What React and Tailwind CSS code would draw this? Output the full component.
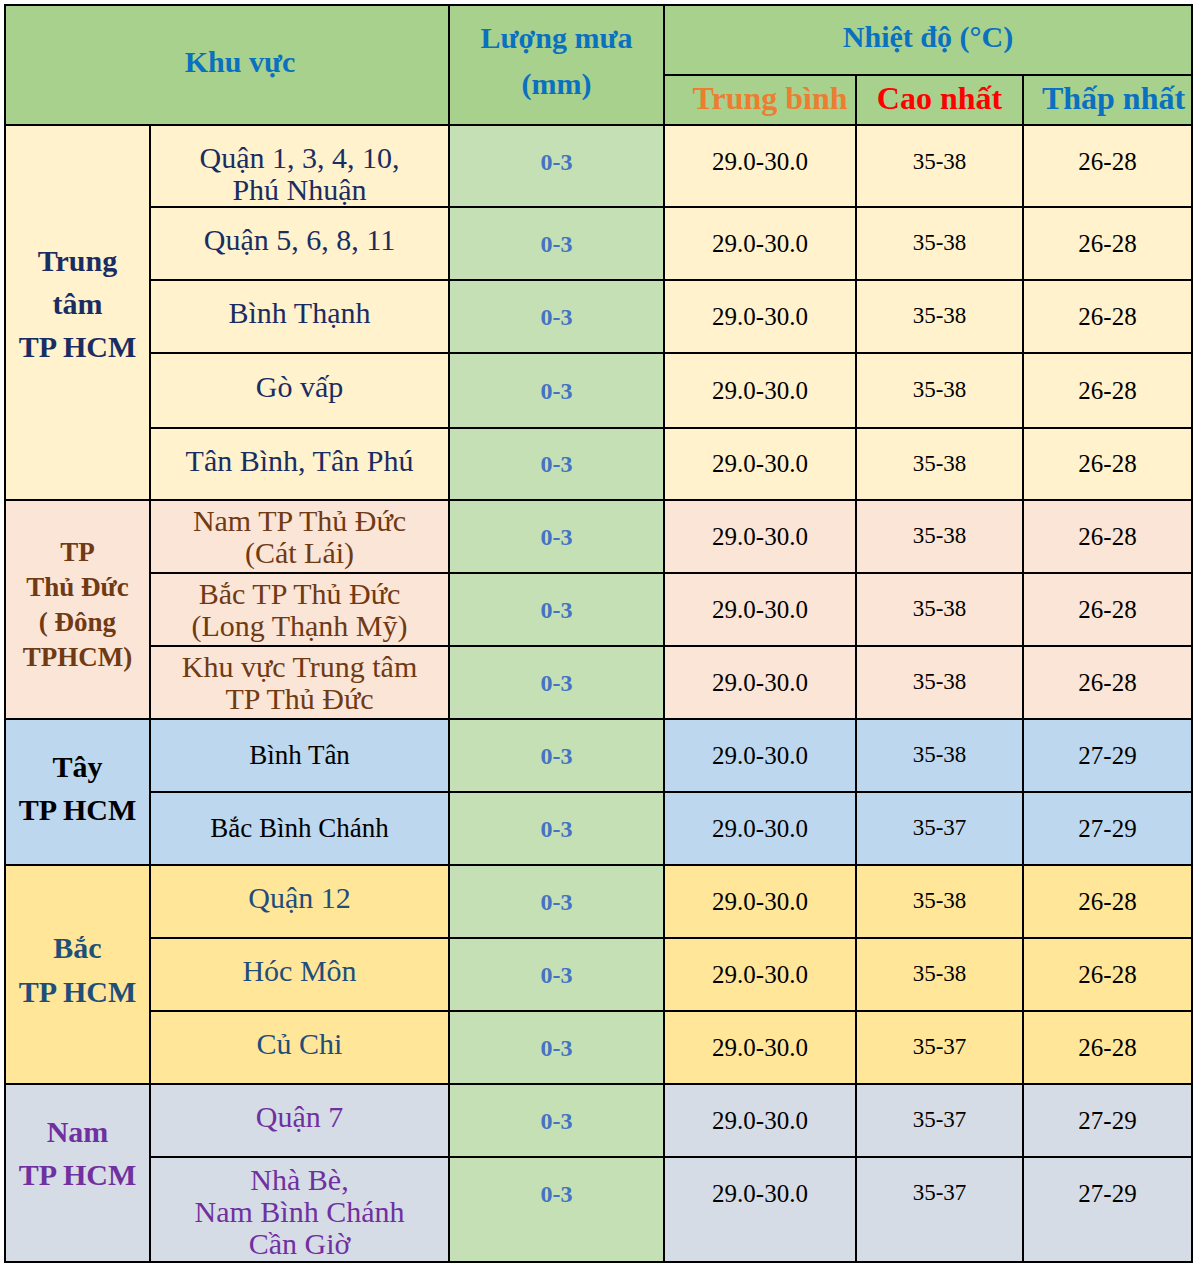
import React from "react";

const groups = [
  {
    label: ["Trung", "tâm", "TP HCM"],
    bg: "bg-[#fff2cc]",
    text: "text-[#1a2d63]",
    labelCls: "text-[30px] leading-[43px] pb-[18px]",
    rows: [
      { h: "h-[82px]", name: ["Quận 1, 3, 4, 10,", "Phú Nhuận"], pad: "pt-[16px]", numPad: "pb-[8px]", max: "35-38", min: "26-28" },
      { h: "h-[73px]", name: ["Quận 5, 6, 8, 11"], max: "35-38", min: "26-28" },
      { h: "h-[73px]", name: ["Bình Thạnh"], max: "35-38", min: "26-28" },
      { h: "h-[75px]", name: ["Gò vấp"], max: "35-38", min: "26-28" },
      { h: "h-[72px]", name: ["Tân Bình, Tân Phú"], max: "35-38", min: "26-28" },
    ],
  },
  {
    label: ["TP", "Thủ Đức", "( Đông", "TPHCM)"],
    bg: "bg-[#fbe5d6]",
    text: "text-[#6f3a14]",
    labelCls: "text-[27px] leading-[35px] pb-[10px]",
    rows: [
      { h: "h-[73px]", name: ["Nam TP Thủ Đức", "(Cát Lái)"], pad: "pb-0", max: "35-38", min: "26-28" },
      { h: "h-[73px]", name: ["Bắc TP Thủ Đức", "(Long Thạnh Mỹ)"], pad: "pb-0", max: "35-38", min: "26-28" },
      { h: "h-[73px]", name: ["Khu vực Trung tâm", "TP Thủ Đức"], pad: "pb-0", max: "35-38", min: "26-28" },
    ],
  },
  {
    label: ["Tây", "TP HCM"],
    bg: "bg-[#bdd7ee]",
    text: "text-black",
    labelCls: "text-[30px] leading-[43px] pb-[8px]",
    rows: [
      { h: "h-[73px]", name: ["Bình Tân"], pad: "pb-[2px]", small: true, max: "35-38", min: "27-29" },
      { h: "h-[73px]", name: ["Bắc Bình Chánh"], pad: "pb-[2px]", small: true, max: "35-37", min: "27-29" },
    ],
  },
  {
    label: ["Bắc", "TP HCM"],
    bg: "bg-[#ffe699]",
    text: "text-[#1f4e79]",
    labelCls: "text-[30px] leading-[44px] pb-[10px]",
    rows: [
      { h: "h-[73px]", name: ["Quận 12"], max: "35-38", min: "26-28" },
      { h: "h-[73px]", name: ["Hóc Môn"], max: "35-38", min: "26-28" },
      { h: "h-[73px]", name: ["Củ Chi"], max: "35-37", min: "26-28" },
    ],
  },
  {
    label: ["Nam", "TP HCM"],
    bg: "bg-[#d6dce5]",
    text: "text-[#7030a0]",
    labelCls: "text-[30px] leading-[43px] pb-[40px]",
    rows: [
      { h: "h-[73px]", name: ["Quận 7"], max: "35-37", min: "27-29" },
      { h: "h-[105px]", name: ["Nhà Bè,", "Nam Bình Chánh", "Cần Giờ"], pad: "pt-[5px]", numPad: "pb-[32px]", max: "35-37", min: "27-29" },
    ],
  },
];

const cell = "border-2 border-black text-center align-middle p-0";

export default function App() {
  return (
    <div className="bg-white w-[1196px] h-[1264px] pl-[4px] pt-[4px] font-['Liberation_Serif',serif]">
      <table className="table-fixed border-collapse w-[1189px]">
        <colgroup>
          <col className="w-[145px]" />
          <col className="w-[299px]" />
          <col className="w-[215px]" />
          <col className="w-[192px]" />
          <col className="w-[167px]" />
          <col className="w-[169px]" />
        </colgroup>
        <thead>
          <tr className="h-[70px] bg-[#a9d18e]">
            <th colSpan={2} rowSpan={2} className={`${cell} text-[30px] font-bold text-[#0a70c0] pb-[8px] pl-[26px]`}>
              Khu vực
            </th>
            <th rowSpan={2} className={`${cell} text-[30px] leading-[46px] font-bold text-[#0a70c0] pb-[8px]`}>
              Lượng mưa
              <br />
              (mm)
            </th>
            <th colSpan={3} className={`${cell} text-[30px] font-bold text-[#0a70c0] pb-[8px]`}>
              Nhiệt độ (°C)
            </th>
          </tr>
          <tr className="h-[50px] bg-[#a9d18e]">
            <th className={`${cell} text-[32px] leading-none font-bold text-[#ed7d31] whitespace-nowrap pb-[4px] pl-[20px]`}>Trung bình</th>
            <th className={`${cell} text-[32px] leading-none font-bold text-[#ff0000] whitespace-nowrap pb-[4px]`}>Cao nhất</th>
            <th className={`${cell} text-[32px] leading-none font-bold text-[#0a70c0] whitespace-nowrap pb-[4px] pl-[12px]`}>Thấp nhất</th>
          </tr>
        </thead>
        <tbody>
          {groups.map((g) =>
            g.rows.map((r, i) => (
              <tr key={g.label.join() + i} className={`${r.h} ${g.bg}`}>
                {i === 0 && (
                  <td rowSpan={g.rows.length} className={`${cell} ${g.text} ${g.labelCls} font-bold`}>
                    {g.label.map((l, k) => (
                      <div key={k} className="whitespace-nowrap">{l}</div>
                    ))}
                  </td>
                )}
                <td className={`${cell} ${g.text} ${r.small ? "text-[27px]" : "text-[30px]"} leading-[32px] ${r.pad || "pb-[7px]"}`}>
                  {r.name.map((n, k) => (
                    <div key={k} className="whitespace-nowrap">{n}</div>
                  ))}
                </td>
                <td className={`${cell} bg-[#c5e0b4] text-[24px] font-bold text-[#4472c4] ${r.numPad || "pb-0"}`}>0-3</td>
                <td className={`${cell} text-[25px] text-black ${r.numPad || "pb-0"}`}>29.0-30.0</td>
                <td className={`${cell} text-[23px] text-black ${r.numPad || "pb-0"}`}>{r.max}</td>
                <td className={`${cell} text-[25px] text-black ${r.numPad || "pb-0"}`}>{r.min}</td>
              </tr>
            ))
          )}
        </tbody>
      </table>
    </div>
  );
}
